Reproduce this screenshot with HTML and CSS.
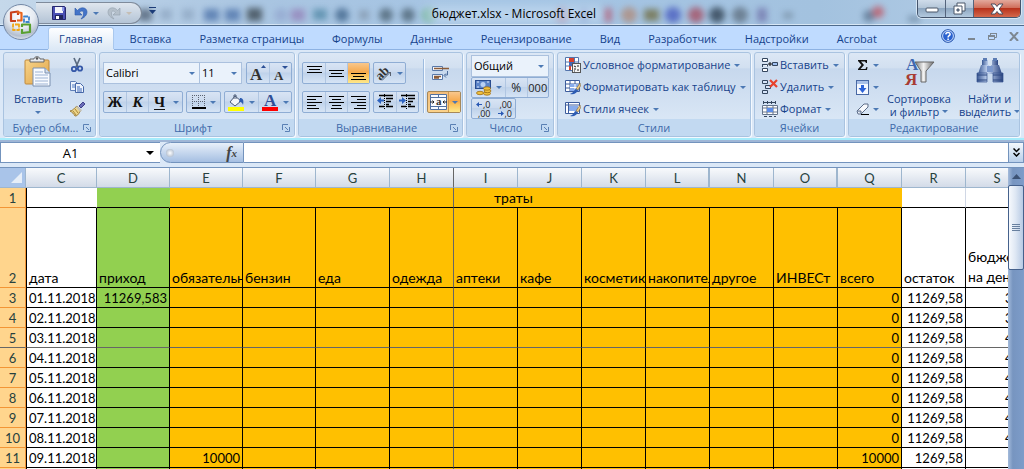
FILE: index.html
```html
<!DOCTYPE html>
<html lang="ru">
<head>
<meta charset="utf-8">
<title>бюджет.xlsx - Microsoft Excel</title>
<link rel="stylesheet" href="styles.css">
</head>
<body>
<svg class="defs" aria-hidden="true">
  <defs>
    <linearGradient id="gTube" x1="0" y1="0" x2="1" y2="0"><stop offset="0" stop-color="#3c5a94"/><stop offset=".4" stop-color="#c5d6f2"/><stop offset="1" stop-color="#2c4682"/></linearGradient>
    <linearGradient id="gGrey" x1="0" y1="0" x2="1" y2="0"><stop offset="0" stop-color="#777"/><stop offset=".45" stop-color="#f2f2f2"/><stop offset="1" stop-color="#6c6c6c"/></linearGradient>
    <linearGradient id="gBoard" x1="0" y1="0" x2="1" y2="1"><stop offset="0" stop-color="#f8d48a"/><stop offset="1" stop-color="#dfa347"/></linearGradient>
  </defs>
</svg>
<div class="window">
  <header class="titlebar">
    <svg class="glass" viewBox="0 0 1024 25" preserveAspectRatio="none" aria-hidden="true">
      <g class="blobs">
        <rect x="138" y="9" width="14" height="12" fill="#4c5c70"/><rect x="160" y="9" width="12" height="11" fill="#8ea6c2"/><rect x="182" y="9" width="12" height="11" fill="#8ea6c2"/>
        <rect x="204" y="9" width="15" height="12" fill="#4a70a8"/><rect x="225" y="9" width="15" height="12" fill="#4a70a8"/><rect x="247" y="8" width="15" height="13" fill="#36424a"/><circle cx="281" cy="15" r="7" fill="#94a8d0"/>
        <rect x="291" y="9" width="14" height="12" fill="#9381b8"/><rect x="313" y="9" width="14" height="11" fill="#4f87a5"/><circle cx="342" cy="15" r="7" fill="#3a5f86"/><rect x="359" y="10" width="10" height="10" fill="#8498ae"/><circle cx="386" cy="15" r="7" fill="#485e6e"/><circle cx="408" cy="15" r="7" fill="#485e6e"/><circle cx="429" cy="15" r="7" fill="#58a878"/>
        <circle cx="562" cy="15" r="7" fill="#b2738c"/><circle cx="584" cy="15" r="6" fill="#727fbd"/><rect x="604" y="8" width="8" height="14" fill="#b4627a"/><circle cx="629" cy="15" r="8" fill="#b08a78"/><rect x="644" y="9" width="15" height="12" fill="#6f6a3c"/><circle cx="673" cy="15" r="8" fill="#4457bd"/><circle cx="696" cy="15" r="8" fill="#a5495c"/><circle cx="717" cy="15" r="8" fill="#283848"/><circle cx="740" cy="15" r="8" fill="#5c6c7c"/><rect x="757" y="8" width="10" height="14" fill="#7174aa"/><rect x="783" y="12" width="10" height="7" fill="#7890a6"/>
        <circle cx="869" cy="16" r="6" fill="#56708c"/><circle cx="878" cy="12" r="6" fill="#c0505c"/><rect x="908" y="16" width="12" height="6" fill="#6c86a0"/>
      </g>
      <rect class="halo" x="425" y="6" width="176" height="16" fill="#c4dbf0"/>
    </svg>
    <div class="quick">
      <button class="qbtn" aria-label="Сохранить"><svg width="14" height="14" viewBox="0 0 14 14"><path d="M.5.5h12l1 1v12H.5z" fill="#4a4fb4" stroke="#26286e"/><path d="M3 1h8v6H3z" fill="#f3f4fb"/><path d="M10 1h2v4h-2z" fill="#8f9be6"/><path d="M3 9h8v4H3z" fill="#20255c"/><path d="M4 10h3v3H4z" fill="#fff"/></svg></button>
      <button class="qbtn" aria-label="Отменить"><svg width="14" height="14" viewBox="0 0 14 14"><path d="M1 2v7h7L5.500 6.500C8 4 10 5 9.500 8c0 2-1 3-2.500 5 5-2 7-6 5.500-9C11 1 6 1 3.500 4.500z" fill="#4474c8" stroke="#2b59a8" stroke-width=".6"/></svg></button>
      <span class="arrow"></span>
      <button class="qbtn" aria-label="Вернуть"><svg width="14" height="14" viewBox="0 0 14 14"><path d="M13 2v7H6l2.500-2.500C6 4 4 5 4.500 8c0 2 1 3 2.500 5C2 11 0 7 1.500 4 3 1 8 1 10.500 4.500z" fill="#b4bfca" stroke="#929fab" stroke-width=".6"/></svg></button>
      <span class="arrow arrow-pale"></span>
    </div>
    <button class="qmore" aria-label="Настройка панели"><svg width="7" height="7" viewBox="0 0 7 7"><path d="M0 0h7v1H0zM0 3h7L3.500 7z" fill="#1c3c78"/></svg></button>
    <h1 class="caption">бюджет.xlsx - Microsoft Excel</h1>
    <div class="winbtns">
      <button class="win win-min" aria-label="Свернуть"><svg width="14" height="8" viewBox="0 0 14 8"><rect x="1" y="3" width="12" height="4" rx="1" fill="#fff" stroke="#4b5768"/></svg></button>
      <button class="win win-max" aria-label="Развернуть"><svg width="13" height="13" viewBox="0 0 13 13"><path d="M4 1h8v8H4z" fill="#fff" stroke="#4b5768"/><path d="M1 4h8v8H1z" fill="#fff" stroke="#4b5768"/><path d="M4 7h2v2H4z" fill="#8aa0b8" stroke="#4b5768"/></svg></button>
      <button class="win win-close" aria-label="Закрыть"><svg width="14" height="12" viewBox="0 0 14 12"><path d="M1 1h4l2 2.500L9 1h4L9.200 6 13 11H9L7 8.500 5 11H1l3.800-5z" fill="#fff" stroke="#4c4c5c"/></svg></button>
    </div>
  </header>

  <button class="office" aria-label="Кнопка Office">
    <svg width="38" height="38" viewBox="0 0 38 38">
      <defs><radialGradient id="orb" cx=".5" cy=".3" r=".75"><stop offset="0" stop-color="#fff"/><stop offset=".5" stop-color="#e6ebf2"/><stop offset=".8" stop-color="#b4bfcf"/><stop offset="1" stop-color="#f4f8fc"/></radialGradient></defs>
      <circle cx="19" cy="19" r="17.500" fill="url(#orb)" stroke="#7388a6"/>
      <g fill="none" stroke-width="2.200" stroke-linejoin="round">
        <path d="M14 18H9V9.500l7-1V12" stroke="#c8401c"/><path d="M15 9l4.500 1v7.500H15" stroke="#e8641c"/>
        <path d="M22 13.500h5V19h-5z" stroke="#3d83cc" stroke-width="1.800" stroke-dasharray="4 1"/>
        <path d="M17 21.500h-6V27h6z" stroke="#f0a818" stroke-width="1.800" stroke-dasharray="4 1"/>
        <path d="M20 24v-2.500h8V29l-8 1v-4" stroke="#58a030"/>
      </g>
    </svg>
  </button>

  <nav class="tabs">
    <button class="tab tab-active">Главная</button><button class="tab">Вставка</button><button class="tab">Разметка страницы</button><button class="tab">Формулы</button><button class="tab">Данные</button><button class="tab">Рецензирование</button><button class="tab">Вид</button><button class="tab">Разработчик</button><button class="tab">Надстройки</button><button class="tab">Acrobat</button>
    <div class="docbtns">
      <button class="plain" aria-label="Справка"><svg width="14" height="14" viewBox="0 0 14 14"><circle cx="7" cy="7" r="6.300" fill="#2a62d0" stroke="#2450a4"/><circle cx="7" cy="7" r="5.400" fill="none" stroke="#cfe0fb"/><path d="M4.800 5.400C5 2.800 9.300 3 9.100 5.400 9 6.800 7.100 6.700 7.100 8.400M7.100 9.400v1.600" fill="none" stroke="#fff" stroke-width="1.500"/></svg></button>
      <button class="plain" aria-label="Свернуть окно"><svg width="9" height="9" viewBox="0 0 9 9"><path d="M1 6h7v2H1z" fill="#7d8791"/></svg></button>
      <button class="plain" aria-label="Восстановить окно"><svg width="9" height="9" viewBox="0 0 9 9"><path d="M2.500 3V1.500h6v4H7M.5 3.500h6v4h-6z" fill="none" stroke="#7d8791"/><path d="M2 1h7v1H2zM0 3h7v2H0z" fill="#7d8791"/></svg></button>
      <button class="plain" aria-label="Закрыть окно"><svg width="10" height="9" viewBox="0 0 10 9"><path d="M1 0l8 9M9 0L1 9" stroke="#7d8791" stroke-width="2"/></svg></button>
    </div>
  </nav>

  <section class="ribbon">
    <section class="group">
      <div class="body clip">
        <button class="big">
          <svg width="28" height="32" viewBox="0 0 28 32"><rect x="1" y="4" width="24" height="24" rx="1" fill="url(#gBoard)" stroke="#c08a3c"/><path d="M6 6V3h4c0-3 6-3 6 0h4v3z" fill="#e8eaee" stroke="#666"/><circle cx="13" cy="2.500" r="1.200" fill="#555"/><path d="M9 12h12l5 5v13H9z" fill="#f8fbff" stroke="#7a90b0"/><path d="M21 12v5h5" fill="#d4dfee" stroke="#7a90b0"/><path d="M11 16h8M11 19h13M11 22h13M11 25h13M11 28h13" stroke="#9db3d4"/></svg>
          <span>Вставить</span><span class="arrow"></span>
        </button>
        <div class="stack">
          <button class="plain" aria-label="Вырезать"><svg width="16" height="16" viewBox="0 0 16 16"><path d="M5 1l4 9M11 1L7 10" stroke="#5a6a80" stroke-width="1.700"/><circle cx="5" cy="12" r="2.200" fill="none" stroke="#3558a8" stroke-width="1.800"/><circle cx="11" cy="11.500" r="2.200" fill="none" stroke="#3558a8" stroke-width="1.800"/></svg></button>
          <button class="plain" aria-label="Копировать"><svg width="16" height="16" viewBox="0 0 16 16"><path d="M1.500 2.500h5l2 2v7h-7z" fill="#eef4fd" stroke="#6080b8"/><path d="M3 6h4M3 8h4" stroke="#4c78c0"/><path d="M6.500 4.500h5l3 3v6h-8z" fill="#eef4fd" stroke="#4668a8"/><path d="M8 8h3M8 10h5M8 12h5" stroke="#3c68b8"/></svg></button>
          <button class="plain" aria-label="Формат по образцу"><svg width="17" height="16" viewBox="0 0 17 16"><path d="M10 5l4-4 2 2-4 4z" fill="#6a6cb8" stroke="#40428c"/><path d="M1 10c3 0 4-3 7-5l4 4c-2 3-3 6-6 6-1-2-3-4-5-5z" fill="#eed68a" stroke="#9a7c3c"/><path d="M4 10l3 4M6 8l3 4" stroke="#a8863c"/><path d="M8 5l5 4-2 2-4-5z" fill="#c8c4b8"/></svg></button>
        </div>
      </div>
      <h2 class="gtitle"><span>Буфер обм...</span><button class="launch" aria-label="Буфер обмена"><svg width="8" height="8" viewBox="0 0 8 8"><path d="M.5 6V.5H6M3 3l3 3M7.500 3v4.500H3" fill="none" stroke="#5a80b4"/></svg></button></h2>
    </section>

    <section class="group">
      <div class="body two">
        <div class="line">
          <label class="sel sel-font"><select aria-label="Шрифт"><option>Calibri</option></select><span class="arrow"></span></label>
          <label class="sel sel-size"><select aria-label="Размер"><option>11</option></select><span class="arrow"></span></label>
          <div class="bar gap4">
            <button class="cell" aria-label="Увеличить"><svg width="18" height="18" viewBox="0 0 18 18"><text x="1" y="16" class="ico-serif ico-17">A</text><path d="M12 4l2.500-3L17 4z" fill="#2c5096"/></svg></button>
            <button class="cell" aria-label="Уменьшить"><svg width="18" height="18" viewBox="0 0 18 18"><text x="2" y="16" class="ico-serif ico-13">A</text><path d="M10 2h6l-3 3z" fill="#2c5096"/></svg></button>
          </div>
        </div>
        <div class="line">
          <div class="bar">
            <button class="cell glyph">Ж</button><button class="cell glyph ital">К</button><button class="cell glyph under">Ч</button><button class="cell slim" aria-label="Виды подчеркивания"><span class="arrow"></span></button>
          </div>
          <div class="bar gap3">
            <button class="cell wide" aria-label="Границы"><svg width="14" height="14" viewBox="0 0 14 14"><path d="M.5 0v12M6.500 0v12M12.500 0v12M0 .5h13M0 6.500h13" stroke="#5a6270" stroke-dasharray="1 1"/><path d="M0 13h14" stroke="#000" stroke-width="2"/></svg><span class="arrow"></span></button>
          </div>
          <div class="bar gap3">
            <button class="cell wide" aria-label="Заливка"><svg width="17" height="17" viewBox="0 0 17 17"><path d="M7 2l6 5-6 5-5-4z" fill="#f2f5fa" stroke="#4c5c78"/><path d="M6 5V1h2v4" fill="none" stroke="#4c5c78"/><path d="M12 4c3 0 4 2 3 7-1-3-2-3-4-3z" fill="#2c5cb0"/><path d="M0 13h16v4H0z" fill="#ff0"/></svg><span class="arrow"></span></button>
            <button class="cell wide" aria-label="Цвет текста"><svg width="17" height="17" viewBox="0 0 17 17"><text x="2" y="12" class="ico-serif ico-17 ico-blue">A</text><path d="M0 13h16v4H0z" fill="#f00"/></svg><span class="arrow"></span></button>
          </div>
        </div>
      </div>
      <h2 class="gtitle"><span>Шрифт</span><button class="launch" aria-label="Параметры шрифта"><svg width="8" height="8" viewBox="0 0 8 8"><path d="M.5 6V.5H6M3 3l3 3M7.500 3v4.500H3" fill="none" stroke="#5a80b4"/></svg></button></h2>
    </section>

    <section class="group">
      <div class="body align">
        <div class="two">
          <div class="line">
            <div class="bar">
              <button class="cell" aria-label="По верхнему краю"><svg width="15" height="16" viewBox="0 0 15 16"><path d="M0 1.500h15M2 4.500h11M0 7.500h15" stroke="#000"/></svg></button>
              <button class="cell" aria-label="По середине"><svg width="15" height="16" viewBox="0 0 15 16"><path d="M0 5.500h15M2 8.500h11M0 11.500h15" stroke="#000"/></svg></button>
              <button class="cell on" aria-label="По нижнему краю"><svg width="15" height="16" viewBox="0 0 15 16"><path d="M0 8.500h15M2 11.500h11M0 14.500h15" stroke="#000"/></svg></button>
            </div>
            <div class="bar gap3"><button class="cell wide2" aria-label="Ориентация"><svg width="17" height="17" viewBox="0 0 17 17"><text x="0" y="12" class="ico-serif ico-13" transform="rotate(-45 7 9)">ab</text><path d="M6 15.500l8-8M14.500 7v4M15 7.500h-4" stroke="#5a6270" fill="none"/></svg><span class="arrow"></span></button></div>
          </div>
          <div class="line">
            <div class="bar">
              <button class="cell" aria-label="По левому краю"><svg width="15" height="14" viewBox="0 0 15 14"><path d="M0 1.500h15M0 4.500h9M0 7.500h15M0 10.500h9M0 13.500h12" stroke="#000"/></svg></button>
              <button class="cell" aria-label="По центру"><svg width="15" height="14" viewBox="0 0 15 14"><path d="M0 1.500h15M3 4.500h9M0 7.500h15M3 10.500h9M2 13.500h11" stroke="#000"/></svg></button>
              <button class="cell" aria-label="По правому краю"><svg width="15" height="14" viewBox="0 0 15 14"><path d="M0 1.500h15M6 4.500h9M0 7.500h15M6 10.500h9M3 13.500h12" stroke="#000"/></svg></button>
            </div>
            <div class="bar gap3">
              <button class="cell" aria-label="Уменьшить отступ"><svg width="17" height="16" viewBox="0 0 17 16"><path d="M0 6.500l4-3.500v2.500h3v2H4V10z" fill="#2c62c0"/><path d="M2 1.500h14M9 4.500h7M9 7.500h5M9 10.500h3M2 12.500h5M9 12.500h7" stroke="#000" stroke-width="1.400"/><path d="M7.500 0v16" stroke="#000" stroke-dasharray="1 1"/></svg></button>
              <button class="cell" aria-label="Увеличить отступ"><svg width="17" height="16" viewBox="0 0 17 16"><path d="M7 6.500L3 3v2.500H0v2h3V10z" fill="#2c62c0"/><path d="M2 1.500h14M9 4.500h7M9 7.500h5M9 10.500h3M2 12.500h5M9 12.500h7" stroke="#000" stroke-width="1.400"/><path d="M7.500 0v16" stroke="#000" stroke-dasharray="1 1"/></svg></button>
            </div>
          </div>
        </div>
        <div class="rule"></div>
        <div class="two">
          <div class="line"><button class="plain wrap" aria-label="Перенос текста"><svg width="17" height="16" viewBox="0 0 17 16"><path d="M.5 1.500h10v4H.5zM.5 9.500h10v5H.5z" fill="#f4f7fc" stroke="#5878a8"/><path d="M2 3.500h15M2 11.500h7M2 13h5" stroke="#8c5c38" stroke-width="1.300"/><path d="M15.500 6v4h-3M14 8.500L12 10.500l2 2" fill="none" stroke="#4c6c9c"/></svg></button></div>
          <div class="line"><div class="bar merged">
            <button class="cell" aria-label="Объединить"><svg width="17" height="16" viewBox="0 0 17 16"><path d="M.5.5h16v15H.5zM0 3.500h17M0 12.500h17M8.500 0v3M8.500 12v4" fill="#f8fbff" stroke="#5070a0"/><path d="M0 8h4M17 8h-4M2.500 6.500L4 8 2.500 9.500M14.500 6.500L13 8l1.500 1.500" stroke="#222" fill="none"/><text x="6" y="11" class="ico-serif ico-11">a</text></svg></button>
            <button class="cell slim on" aria-label="Виды объединения"><span class="arrow"></span></button>
          </div></div>
        </div>
      </div>
      <h2 class="gtitle"><span>Выравнивание</span><button class="launch" aria-label="Параметры выравнивания"><svg width="8" height="8" viewBox="0 0 8 8"><path d="M.5 6V.5H6M3 3l3 3M7.500 3v4.500H3" fill="none" stroke="#5a80b4"/></svg></button></h2>
    </section>

    <section class="group">
      <div class="body number">
        <label class="sel"><select aria-label="Числовой формат"><option>Общий</option></select><span class="arrow"></span></label>
        <div class="bar stretch">
          <button class="cell money" aria-label="Денежный формат"><svg width="17" height="17" viewBox="0 0 17 17"><rect x=".5" y="1.500" width="15" height="8" fill="#5c84c8" stroke="#284c90"/><circle cx="8" cy="5.500" r="2.500" fill="#b8d0f4"/><path d="M2 3h2M12 3h2M2 8h2" stroke="#d8e6fa"/><g fill="#f0c03c" stroke="#9c6c14" stroke-width=".8"><ellipse cx="12" cy="14.500" rx="3.500" ry="1.700"/><ellipse cx="12.500" cy="12" rx="3.500" ry="1.700"/><ellipse cx="12" cy="9.500" rx="3.500" ry="1.700"/><ellipse cx="5" cy="14" rx="3.500" ry="1.700"/></g></svg><span class="arrow"></span></button>
          <button class="cell grow txt">%</button><button class="cell grow txt zeros">000</button>
        </div>
        <div class="bar dec">
          <button class="cell tiny"><span class="mix"><svg width="6" height="5" viewBox="0 0 6 5"><path d="M0 2.500L3 0v2h3v1H3v2z" fill="#2858b4"/></svg>,0</span><span>,00</span></button><button class="cell tiny"><span>,00</span><span class="mix"><svg width="6" height="5" viewBox="0 0 6 5"><path d="M6 2.500L3 0v2H0v1h3v2z" fill="#2858b4"/></svg>,0</span></button>
        </div>
      </div>
      <h2 class="gtitle"><span>Число</span><button class="launch" aria-label="Формат числа"><svg width="8" height="8" viewBox="0 0 8 8"><path d="M.5 6V.5H6M3 3l3 3M7.500 3v4.500H3" fill="none" stroke="#5a80b4"/></svg></button></h2>
    </section>

    <section class="group">
      <div class="body rows">
        <button class="row"><svg width="16" height="16" viewBox="0 0 16 16"><path d="M.5.500h13v13H.5zM.5 5h13M.5 9h13M5 .5v13M9.500.500v13" fill="#fff" stroke="#5474ac"/><path d="M4 1h5v4H4zM4 9h2v4H4z" fill="#d8402c"/><path d="M4 5h5v4H4z" fill="#4468b8"/><rect x="7.500" y="6.500" width="8" height="9" fill="#f4f4f4" stroke="#555"/><path d="M9 9l2 1M13 8v2M9 12h2M13 12v2M9 14h1" stroke="#222"/></svg>Условное форматирование<span class="arrow"></span></button>
        <button class="row"><svg width="16" height="16" viewBox="0 0 16 16"><path d="M.5 1.500h14v11H.5zM.5 5h14M.5 9h14M5 1.500v11M10 1.500v11" fill="#fff" stroke="#3c5c9c"/><path d="M5 5h9v7H5z" fill="#88acec"/><path d="M5 8.500h9M10 5v7" stroke="#fff"/><path d="M15 4l-4 6 2 1 2.500-4z" fill="#f0d088" stroke="#806030" stroke-width=".6"/><path d="M5 15c4 1 7-1 8-4l-3-1c-1 2-2 4-5 5z" fill="#2c5cb4"/></svg>Форматировать как таблицу<span class="arrow"></span></button>
        <button class="row"><svg width="16" height="16" viewBox="0 0 16 16"><path d="M.5 1.500h14v11H.5zM.5 4h14M3.500 1.500v11" fill="#fff" stroke="#3c5c9c"/><path d="M4 5h9v5H4z" fill="#88acec"/><path d="M15 4l-4 6 2 1 2.500-4z" fill="#f0d088" stroke="#806030" stroke-width=".6"/><path d="M5 15c4 1 7-1 8-4l-3-1c-1 2-2 4-5 5z" fill="#2c5cb4"/></svg>Стили ячеек<span class="arrow"></span></button>
      </div>
      <h2 class="gtitle"><span>Стили</span></h2>
    </section>

    <section class="group">
      <div class="body rows">
        <button class="row"><svg width="16" height="16" viewBox="0 0 16 16"><path d="M.5 1.500h5v3h-5zM.5 11.500h5v3h-5zM.5 7.500h5v2M.5 7v3" fill="#fff" stroke="#34465e"/><path d="M10.500 5.500h5v3h-5z" fill="#a0c0f0" stroke="#34465e"/><path d="M6 7h4M8 5v4" stroke="#111"/></svg>Вставить<span class="arrow"></span></button>
        <button class="row"><svg width="16" height="16" viewBox="0 0 16 16"><path d="M.5 1.500h5v3h-5zM3.500 6.500h5v3h-5zM.5 11.500h5v3h-5z" fill="#d8e6fa" stroke="#34465e"/><path d="M8 1l7 7M15 1L8 8" stroke="#e8432c" stroke-width="2.200"/></svg>Удалить<span class="arrow"></span></button>
        <button class="row"><svg width="16" height="16" viewBox="0 0 16 16"><path d="M1 1.500h13M1.500 0v3M5.500 0v3M9.500 0v3M13.500 0v3" stroke="#34465e"/><path d="M.5 4.500h15v9H.5zM.5 7h15M.5 11h15M5 4.500v9M11 4.500v9" fill="#fff" stroke="#64748c"/><path d="M5 7h6v4H5z" fill="#5c8ce8"/><path d="M2 15.500h12" stroke="#34465e" stroke-dasharray="3 2"/></svg>Формат<span class="arrow"></span></button>
      </div>
      <h2 class="gtitle"><span>Ячейки</span></h2>
    </section>

    <section class="group">
      <div class="body edit">
        <div class="rows">
          <button class="row" aria-label="Сумма"><svg width="13" height="14" viewBox="0 0 13 14"><path d="M2 2h9v3h-1L9 3.500H5L8 7l-3.500 4H9.500L10.500 9h1L11 12H2v-1l3.500-4L2 3z" fill="#111"/></svg><span class="arrow"></span></button>
          <button class="row" aria-label="Заполнить"><svg width="13" height="15" viewBox="0 0 13 15"><rect x=".5" y=".5" width="12" height="14" fill="#f4f8ff" stroke="#4868a4"/><path d="M1 1h11v3H1z" fill="#a8c0e8"/><path d="M5 5h3v3h2.500l-4 5-4-5H5z" fill="#2c62d8"/></svg><span class="arrow"></span></button>
          <button class="row" aria-label="Очистить"><svg width="13" height="14" viewBox="0 0 13 14"><path d="M1 9l7-7h4v3l-7 7H2z" fill="#f6f8fc" stroke="#5c6c88"/><path d="M1 9h4v3" fill="#c8d4e8" stroke="#5c6c88"/><path d="M5 12.500h8" stroke="#000"/></svg><span class="arrow"></span></button>
        </div>
        <button class="big">
          <svg width="32" height="32" viewBox="0 0 32 32"><text x="3" y="14" class="ico-serif ico-17 ico-mid">A</text><text x="2" y="29" class="ico-serif ico-17 ico-red">Я</text><path d="M12 6h19l-8 9v11h-5V15z" fill="url(#gGrey)" stroke="#666"/></svg>
          <span>Сортировка</span><span>и фильтр<span class="arrow"></span></span>
        </button>
        <button class="big">
          <svg width="32" height="32" viewBox="0 0 32 32"><path d="M8 4h6v5H8zM18 4h6v5h-6z" fill="url(#gTube)"/><path d="M9 2h4v3H9zM19 2h4v3h-4z" fill="#5c7cb4"/><path d="M7 9h8l1 9H4zM17 9h8l3 9H16z" fill="url(#gTube)"/><path d="M3 17h10v9H3zM19 17h10v9H19z" fill="url(#gTube)" stroke="#34508c" stroke-width=".7"/><path d="M13 10h6v6h-6z" fill="#7c98cc"/><path d="M3 19h10M19 19h10M3 24h10M19 24h10" stroke="#2a4680"/></svg>
          <span>Найти и</span><span>выделить<span class="arrow"></span></span>
        </button>
      </div>
      <h2 class="gtitle"><span>Редактирование</span></h2>
    </section>
  </section>

  <div class="formula">
    <input class="namebox" aria-label="Имя" value="A1"><button class="plain namedrop" aria-label="Список имен"><span class="arrow arrow-black"></span></button>
    <div class="fx"><span class="knob"></span><button class="plain fxbtn" aria-label="Вставить функцию"><i>f</i>x</button></div>
    <input class="fxinput" aria-label="Строка формул">
    <button class="expand" aria-label="Развернуть строку формул"><svg width="7" height="9" viewBox="0 0 7 9"><path d="M.5.500l3 3 3-3M.5 5l3 3 3-3" fill="none" stroke="#000" stroke-width="1.500"/></svg></button>
  </div>

  <main class="sheet">
    <div class="gridwrap">
    <table class="grid">
      <colgroup><col class="w26"><col class="w71"><col class="w73"><col class="w73"><col class="w73"><col class="w74"><col class="w64"><col class="w64"><col class="w64"><col class="w64"><col class="w64"><col class="w64"><col class="w64"><col class="w64"><col class="w64"><col></colgroup>
      <thead><tr><th class="corner"><svg width="11" height="11" viewBox="0 0 11 11"><path d="M11 0v11H0z" fill="#e6eef8"/></svg></th><th>C</th><th>D</th><th>E</th><th>F</th><th>G</th><th class="split">H</th><th>I</th><th>J</th><th>K</th><th class="hid">L</th><th>N</th><th class="hid">O</th><th>Q</th><th>R</th><th class="clipr">S</th></tr></thead>
      <tbody>
        <tr class="r1"><th>1</th><td></td><td class="in"></td><td class="out split" colspan="4"></td><td class="out total" colspan="7">траты</td><td class="soft"></td><td></td></tr>
        <tr class="r2"><th>2</th><td>дата</td><td class="in">приход</td><td class="out">обязательн</td><td class="out">бензин</td><td class="out">еда</td><td class="out split">одежда</td><td class="out">аптеки</td><td class="out">кафе</td><td class="out">косметик</td><td class="out">накопител</td><td class="out">другое</td><td class="out">ИНВЕСт</td><td class="out">всего</td><td>остаток</td><td class="tall">бюджет<br>на день</td></tr>
        <tr><th>3</th><td>01.11.2018</td><td class="in">11269,583</td><td class="out"></td><td class="out"></td><td class="out"></td><td class="out split"></td><td class="out"></td><td class="out"></td><td class="out"></td><td class="out"></td><td class="out"></td><td class="out"></td><td class="out">0</td><td>11269,58</td><td class="cut">3</td></tr>
        <tr><th>4</th><td>02.11.2018</td><td class="in"></td><td class="out"></td><td class="out"></td><td class="out"></td><td class="out split"></td><td class="out"></td><td class="out"></td><td class="out"></td><td class="out"></td><td class="out"></td><td class="out"></td><td class="out">0</td><td>11269,58</td><td class="cut">3</td></tr>
        <tr class="hsplit"><th>5</th><td>03.11.2018</td><td class="in"></td><td class="out"></td><td class="out"></td><td class="out"></td><td class="out split"></td><td class="out"></td><td class="out"></td><td class="out"></td><td class="out"></td><td class="out"></td><td class="out"></td><td class="out">0</td><td>11269,58</td><td class="cut">4</td></tr>
        <tr><th>6</th><td>04.11.2018</td><td class="in"></td><td class="out"></td><td class="out"></td><td class="out"></td><td class="out split"></td><td class="out"></td><td class="out"></td><td class="out"></td><td class="out"></td><td class="out"></td><td class="out"></td><td class="out">0</td><td>11269,58</td><td class="cut">4</td></tr>
        <tr><th>7</th><td>05.11.2018</td><td class="in"></td><td class="out"></td><td class="out"></td><td class="out"></td><td class="out split"></td><td class="out"></td><td class="out"></td><td class="out"></td><td class="out"></td><td class="out"></td><td class="out"></td><td class="out">0</td><td>11269,58</td><td class="cut">4</td></tr>
        <tr><th>8</th><td>06.11.2018</td><td class="in"></td><td class="out"></td><td class="out"></td><td class="out"></td><td class="out split"></td><td class="out"></td><td class="out"></td><td class="out"></td><td class="out"></td><td class="out"></td><td class="out"></td><td class="out">0</td><td>11269,58</td><td class="cut">4</td></tr>
        <tr><th>9</th><td>07.11.2018</td><td class="in"></td><td class="out"></td><td class="out"></td><td class="out"></td><td class="out split"></td><td class="out"></td><td class="out"></td><td class="out"></td><td class="out"></td><td class="out"></td><td class="out"></td><td class="out">0</td><td>11269,58</td><td class="cut">4</td></tr>
        <tr><th>10</th><td>08.11.2018</td><td class="in"></td><td class="out"></td><td class="out"></td><td class="out"></td><td class="out split"></td><td class="out"></td><td class="out"></td><td class="out"></td><td class="out"></td><td class="out"></td><td class="out"></td><td class="out">0</td><td>11269,58</td><td class="cut">4</td></tr>
        <tr><th>11</th><td>09.11.2018</td><td class="in"></td><td class="out">10000</td><td class="out"></td><td class="out"></td><td class="out split"></td><td class="out"></td><td class="out"></td><td class="out"></td><td class="out"></td><td class="out"></td><td class="out"></td><td class="out">10000</td><td>1269,58</td><td></td></tr>
        <tr><th></th><td></td><td class="in"></td><td class="out"></td><td class="out"></td><td class="out"></td><td class="out split"></td><td class="out"></td><td class="out"></td><td class="out"></td><td class="out"></td><td class="out"></td><td class="out"></td><td class="out"></td><td></td><td></td></tr>
      </tbody>
    </table>
    </div>
    <div class="scroll">
      <button class="scrollup" aria-label="Вверх"><svg width="9" height="5" viewBox="0 0 9 5"><path d="M0 5l4.500-5L9 5z" fill="#3c5274"/></svg></button>
      <div class="thumb"><span></span><span></span><span></span><span></span></div>
    </div>
  </main>
</div>
</body>
</html>
```
FILE: styles.css
```css
* { box-sizing: border-box; }
html, body { height: 100%; margin: 0; }
body { font: 11px/16px "Open Sans", "Noto Sans", sans-serif; color: #15428b; overflow: hidden; }
button, select, input { font: inherit; color: inherit; margin: 0; padding: 0; border: 0; background: none; border-radius: 0; outline: 0; }
svg { display: block; flex: none; }
h1, h2 { margin: 0; font: inherit; }
.defs { position: absolute; width: 0; height: 0; }
.window { position: relative; display: flex; flex-direction: column; height: 100vh; background: #bfdbff; overflow: hidden; }

.arrow { display: inline-block; flex: none; width: 0; height: 0; border: solid transparent; border-width: 3px 3px 0; border-top-color: #4c79b4; }
.arrow-pale { border-top-color: #c5beb4; }
.arrow-black { border-width: 4px 4px 0; border-top-color: #000; }
.plain { display: flex; align-items: center; justify-content: center; }

/* Title bar */
.titlebar { position: relative; display: flex; flex: none; align-items: flex-start; height: 26px; padding-left: 36px; background: linear-gradient(90deg, #c5d8ea 0, #a9c5e1 25%, #a4c4e4 50%, #a3c2df 80%, #b4cde6 100%); border-bottom: 1px solid #4f6b8c; box-shadow: inset 0 -1px #d8e8f6; }
.glass { position: absolute; inset: 0; width: 100%; height: 25px; }
.blobs { filter: blur(3px); opacity: .75; }
.halo { filter: blur(5px); opacity: .7; }
.quick { position: relative; display: flex; align-items: center; gap: 8px; width: 106px; height: 22px; margin-top: 2px; padding-left: 16px; border: 1px solid #7f8b9b; border-left: 0; border-radius: 0 11px 11px 0; background: linear-gradient(#dfe6ee, #b4c4d6); }
.quick .arrow { margin-left: -3px; }
.qbtn { flex: none; }
.qmore { position: relative; margin: 7px 0 0 7px; }
.caption { position: absolute; inset: 0; text-align: center; font-size: 12px; line-height: 27px; color: #000; padding-left: 4px; }
.winbtns { position: relative; display: flex; height: 18px; margin: 0 3px 0 auto; border: 1px solid #44546c; border-top: 0; border-radius: 0 0 5px 5px; overflow: hidden; box-shadow: 0 0 0 1px #d6e6f4; }
.win { display: flex; align-items: center; justify-content: center; width: 28px; background: linear-gradient(#cfdcea 0, #b4c6d8 45%, #8da6c0 50%, #b3c9de 100%); border-right: 1px solid #54647c; }
.win-close { width: 46px; border-right: 0; background: linear-gradient(#e3a99c 0, #d0705c 45%, #b8331c 50%, #d4684c 100%); }
.office { position: absolute; left: 2px; top: 3px; z-index: 2; }

/* Tabs */
.tabs { display: flex; flex: none; align-items: flex-end; height: 24px; padding: 0 5px 0 48px; border-bottom: 1px solid #8db2e3; background: #bfdbff; }
.tab { height: 22px; padding: 0 13px; line-height: 20px; border: 1px solid transparent; border-bottom: 0; white-space: nowrap; }
.tab-active { padding: 0 10px; margin-right: 2px; border-color: #a9c8ee; border-radius: 3px 3px 0 0; background: linear-gradient(#fdfeff, #dde9f6); box-shadow: 0 1px #dde9f6; }
.docbtns { display: flex; align-items: center; gap: 12px; margin-left: auto; height: 26px; }

/* Ribbon */
.ribbon { display: grid; flex: none; grid-template-columns: 93fr 196fr 165fr 88fr 194fr 91fr 172fr; gap: 3px; padding: 2px 4px 1px 3px; border-bottom: 2px solid #a6ecfb; background: #dbe8f7; height: 90px; }
.group { display: flex; flex-direction: column; min-width: 0; border: 1px solid #a9c3e0; border-radius: 3px; background: linear-gradient(#dce7f5 0, #d2e0f0 18%, #c7d8ed 19%, #dfebf8 100%); box-shadow: 1px 1px #f4f9ff; overflow: hidden; }
.body { display: flex; flex: 1; min-height: 0; }
.gtitle { display: flex; align-items: center; height: 17px; padding: 0 4px; background: #c2d9f1; color: #3e6aaa; }
.gtitle span { flex: 1; text-align: center; white-space: nowrap; }
.launch { flex: none; }
.clip { padding-left: 10px; gap: 6px; }
.stack { display: grid; grid-template-rows: repeat(3, 22px); padding-top: 1px; }
.big { display: flex; flex-direction: column; align-items: center; padding-top: 3px; white-space: nowrap; }
.big > span:not(.arrow) { line-height: 13px; }
.big svg { margin-bottom: 4px; }
.big > .arrow { margin-top: 6px; }
.big span .arrow { margin: 0 0 3px 3px; }
.two { display: flex; flex-direction: column; gap: 7px; padding: 9px 0 0 3px; }
.line { display: flex; height: 22px; }
.sel { position: relative; display: flex; align-items: center; height: 22px; background: #eaf2fb; border: 1px solid #abc1de; color: #000; }
.sel select { appearance: none; width: 100%; height: 20px; padding-left: 2px; color: #000; }
.sel .arrow { position: absolute; right: 4px; pointer-events: none; }
.sel-font { width: 97px; }
.sel-size { width: 43px; margin-left: -1px; }
.bar { display: flex; height: 22px; border: 1px solid #8fadd4; border-radius: 2px; background: linear-gradient(#d8e4f4 0, #cbdaee 45%, #bfd2ea 50%, #d6e4f5 100%); }
.gap3 { margin-left: 3px; }
.gap4 { margin-left: 4px; }
.cell { display: flex; align-items: center; justify-content: center; width: 22px; gap: 4px; }
.cell + .cell { border-left: 1px solid #b0c6e2; }
.slim { width: 12px; }
.wide { width: 33px; }
.wide2 { width: 31px; }
.on { background: linear-gradient(#f8c78c 0, #f6a94c 45%, #fbc058 60%, #fee88a 100%); }
.glyph { width: 22px; font: bold 15px/20px "Liberation Serif", serif; color: #111; }
.ital { font-style: italic; }
.under { text-decoration: underline; text-underline-offset: 2px; }
.glyph + .slim { border-left: 0; }
.align .rule { width: 1px; margin: 6px 6px 6px 4px; background: #9dbbdf; box-shadow: 1px 0 #f2f8ff; }
.align > .two:last-child { padding-left: 0; margin-left: -3px; }
.wrap { width: 22px; margin-left: 2px; }
.merged { border-color: #a78858; background: linear-gradient(#f2bd7c, #fbd28a); }
.merged .cell { width: 20px; border-color: #d09850; }
.merged .slim { width: 12px; }
.number { flex-direction: column; padding: 2px 4px 0; }
.stretch .cell { flex: 1; }
.stretch .money { flex: 0 0 33px; }
.txt { color: #222; font-size: 12px; }
.zeros { font-size: 11px; }
.dec { width: 45px; height: 21px; }
.tiny { flex-direction: column; align-items: flex-end; gap: 0; flex: 1; padding-right: 3px; color: #222; font-size: 9px; line-height: 9px; }
.dec .tiny + .tiny { border-left: 0; }
.mix { display: flex; align-items: center; gap: 1px; }
.rows { display: grid; grid-template-rows: repeat(3, 22px); padding: 1px 0 0 7px; justify-items: start; }
.row { display: flex; align-items: center; gap: 2px; white-space: nowrap; }
.row .arrow { margin-left: 2px; }
.edit { gap: 8px; }
.edit .rows { padding-left: 7px; }

.ico-serif { font-family: "Liberation Serif", serif; font-weight: bold; fill: #333; }
.ico-17 { font-size: 17px; }
.ico-13 { font-size: 13px; }
.ico-11 { font-size: 11px; }
.ico-blue { fill: #2f4f96; }
.ico-mid { fill: #3f68b0; }
.ico-red { fill: #a83c34; }

/* Formula bar */
.formula { display: flex; flex: none; height: 28px; padding: 2px 0 4px; border-bottom: 1px solid #7393bd; background: linear-gradient(#9fb6d6 0, #9fb6d6 2px, #dbe8f7 2px); }
.namebox { width: 140px; background: #fff; color: #000; text-align: center; border: 1px solid #7393bd; border-right: 0; font-size: 13px; }
.namedrop { width: 20px; background: #fff; border: solid #7393bd; border-width: 1px 0; }
.fx { display: flex; align-items: center; justify-content: space-between; width: 84px; padding: 0 6px 0 5px; border: 1px solid #7393bd; border-radius: 11px 0 0 11px; background: linear-gradient(#e8f0fa, #a5bfe2); }
.knob { width: 8px; height: 8px; border-radius: 50%; background: radial-gradient(#fff, #9cabc0); }
.fxbtn { color: #444; font: italic bold 11px/16px "Liberation Serif", serif; }
.fxbtn i { font-size: 16px; }
.fxinput { flex: 1; min-width: 0; background: #fff; border: solid #7393bd; border-width: 1px 0; }
.expand { display: flex; align-items: center; justify-content: center; width: 16px; border: 1px solid #7393bd; background: linear-gradient(#f3f8fd, #b8cfea); }

/* Sheet */
.sheet { display: flex; flex: 1; min-height: 0; background: #fff; }
.gridwrap { flex: 1; min-width: 0; overflow: hidden; }
.grid { width: 100%; table-layout: fixed; border-collapse: separate; border-spacing: 0; font: 13px/18px Lato, Carlito, "Open Sans", sans-serif; color: #000; }
.w26 { width: 26px; } .w71 { width: 71px; } .w73 { width: 73px; } .w74 { width: 74px; } .w64 { width: 64px; }
.grid th, .grid td { height: 20px; padding: 0 2px; overflow: hidden; white-space: nowrap; font-weight: normal; }
.grid th { color: #27413e; padding: 0; }
.grid thead th { background: linear-gradient(#f8fafc, #d3dbe8); border-right: 1px solid #9eb6ce; border-bottom: 1px solid #9eb6ce; }
.grid thead .corner { background: #a9c4e9; }
.corner svg { margin: 0 3px 0 auto; }
.grid thead .hid { border-right-width: 2px; }
.grid tbody th { background: #ffd58d; border-right: 1px solid #f29536; border-bottom: 1px solid #f29536; }
.grid td { text-align: right; border-right: 1px solid #000; border-bottom: 1px solid #000; }
.grid td:nth-child(2) { border-left: 1px solid #000; }
.grid td:last-child { border-right: 0; }
.grid .in { background: #92d050; }
.grid .out { background: #ffc000; }
.grid .r1 td { border-right-color: transparent; }
.grid .r1 .soft { border-right-color: #d0d7e5; }
.grid .r1 .total { text-align: left; padding-left: 40px; font-size: 14px; }
.grid .r2 th, .grid .r2 td { height: 80px; vertical-align: bottom; text-align: left; }
.grid .r2 td { font-size: 14px; }
.grid .r2 th { text-align: center; }
.grid .r2 .tall { line-height: 20px; }
.grid thead .split, .grid tbody .split, .grid .r1 .split { border-right-color: #666; }
.grid .hsplit th, .grid .hsplit td { border-bottom-color: #666; }
.grid .cut { text-align: left; padding-left: 39px; }
.grid thead .clipr { border-right: 0; padding-left: 20px; }
.scroll { display: flex; flex: none; flex-direction: column; width: 16px; background: linear-gradient(90deg, #a4bbdb 0, #7795c0 30%, #7d9cc9 100%); }
.scrollup { display: flex; align-items: center; justify-content: center; height: 17px; }
.thumb { display: flex; flex-direction: column; align-items: center; justify-content: center; gap: 1px; height: 85px; border: 1px solid #45618c; border-radius: 2px; background: linear-gradient(90deg, #f6f9fd 0, #dfe8f4 45%, #b7cae4 100%); }
.thumb span { width: 8px; height: 1px; background: #68809f; }
```
